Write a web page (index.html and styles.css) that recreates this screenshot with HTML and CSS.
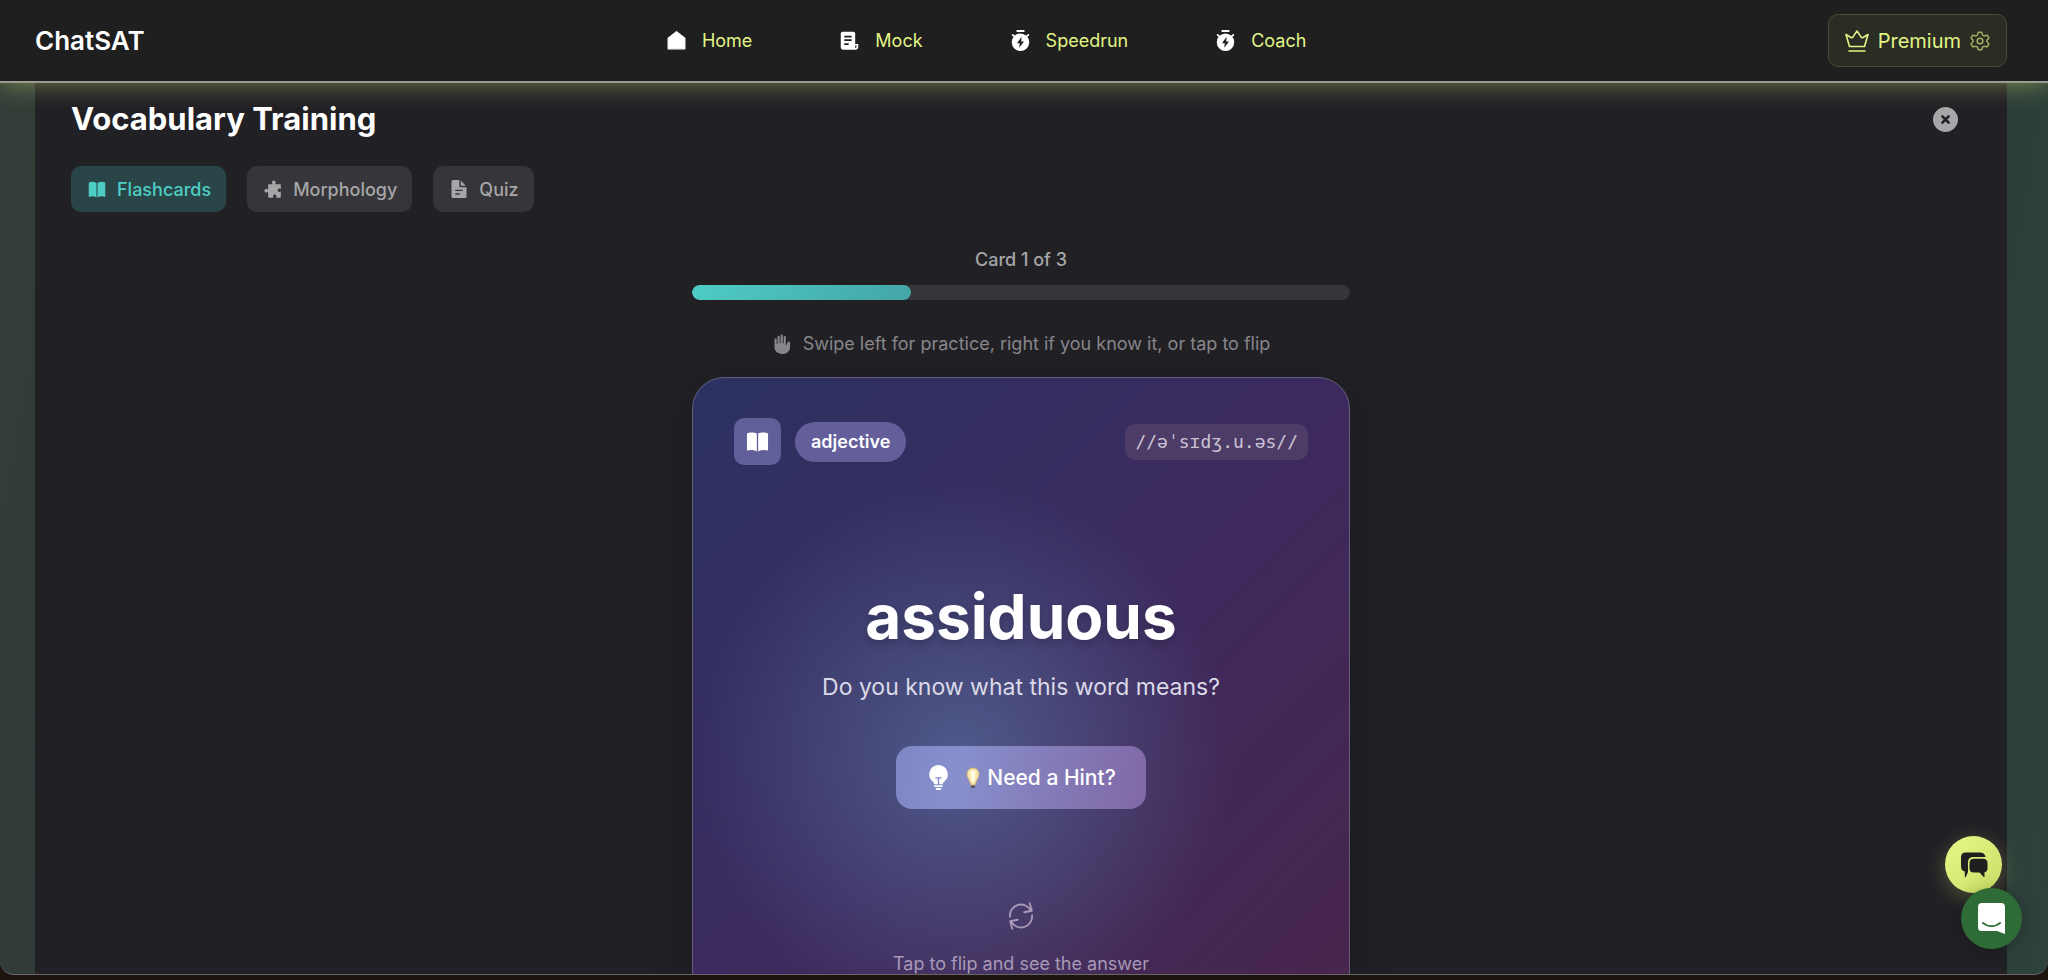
FILE: index.html
```
<!DOCTYPE html>
<html lang="en">
<head>
  <meta charset="UTF-8">
  <meta name="viewport" content="width=device-width, initial-scale=1.0">
  <title>ChatSAT - Vocabulary Training</title>
  <link rel="stylesheet" href="styles.css">
</head>
<body>
  <div class="window">
    <header class="navbar">
      <a class="brand" href="#">ChatSAT</a>
      <nav class="nav-links">
        <a href="#">
          <svg class="nav-icon" viewBox="0 0 24 24"><path d="M12 2 21.500 9.500V21.500h-19V9.500z" fill="currentColor" stroke="currentColor" stroke-width="1.500" stroke-linejoin="round"/></svg>
          Home
        </a>
        <a href="#">
          <svg class="nav-icon" viewBox="0 0 24 24"><path fill="currentColor" fill-rule="evenodd" d="M4 2h12.500a2 2 0 0 1 2 2v12H22v3.500a3 3 0 0 1-3 3H5a3 3 0 0 1-3-3V4a2 2 0 0 1 2-2zm2 4.500v2h8.500v-2zm0 4.200v2h8.500v-2zM6 15v2h5v-2zm12.500 2.800v2.700c1 0 1.500-.5 1.500-1.300v-1.400z"/></svg>
          Mock
        </a>
        <a href="#">
          <svg class="nav-icon" viewBox="0 0 24 24"><path fill="currentColor" fill-rule="evenodd" d="M7.500 0h9v2.200h-9zM12 4a10 10 0 1 1 0 20 10 10 0 0 1 0-20zm1.200 3.800L8 15h3.200l-.6 5.200L16 13h-3.200z"/><path d="m3 5.500 2.200 2M21 5.500l-2.200 2" stroke="currentColor" stroke-width="2" stroke-linecap="round"/></svg>
          Speedrun
        </a>
        <a href="#">
          <svg class="nav-icon" viewBox="0 0 24 24"><path fill="currentColor" fill-rule="evenodd" d="M7.500 0h9v2.200h-9zM12 4a10 10 0 1 1 0 20 10 10 0 0 1 0-20zm1.200 3.800L8 15h3.200l-.6 5.200L16 13h-3.200z"/><path d="m3 5.500 2.200 2M21 5.500l-2.200 2" stroke="currentColor" stroke-width="2" stroke-linecap="round"/></svg>
          Coach
        </a>
      </nav>
      <button class="premium" type="button">
        <svg class="crown" viewBox="0 0 24 24" fill="none" stroke="currentColor" stroke-width="1.600" stroke-linejoin="round" stroke-linecap="round"><path d="M4.500 17.500 1 5.500l5 3c.8.500 1.600.2 2-.6L12 2l4 5.900c.4.800 1.200 1.100 2 .6l5-3-3.500 12zM4 22h16"/></svg>
        Premium
        <svg class="gear" viewBox="0 0 24 24" fill="none" stroke="currentColor" stroke-width="1.800" stroke-linejoin="round"><path d="M10 1.500h4c.5 0 .7 3 1.200 3.400.5.500 1.200.9 1.900 1 .7.200 3.200-1.400 3.600-.9l2 3.500c.3.500-2.200 2.100-2.400 2.700v1.600c.2.700 2.700 2.200 2.400 2.700l-2 3.500c-.4.500-2.900-1-3.600-.8-.7.100-1.400.5-1.900 1-.5.500-.7 3.300-1.200 3.300h-4c-.5 0-.7-2.800-1.200-3.300-.5-.5-1.200-.9-1.900-1-.7-.2-3.200 1.300-3.600.8l-2-3.500c-.3-.5 2.200-2 2.400-2.700v-1.600c-.2-.6-2.700-2.200-2.400-2.700l2-3.500c.4-.5 2.900 1.100 3.600.9.700-.1 1.400-.5 1.900-1 .5-.4.700-3.400 1.200-3.400z"/><circle cx="12" cy="12" r="3.400"/></svg>
      </button>
    </header>

    <main class="panel">
      <div class="panel-head">
        <h1>Vocabulary Training</h1>
        <button class="close" type="button" aria-label="Close">
          <svg viewBox="0 0 24 24" fill="none" stroke="currentColor" stroke-width="2.500" stroke-linecap="round"><path d="m9 9 6 6m0-6-6 6"/></svg>
        </button>
      </div>

      <div class="tabs">
        <button class="tab active" type="button">
          <svg viewBox="0 0 24 24" fill="currentColor"><path d="M1 3.500c3.500-1.500 7-1.300 10.300.5V23C8 21.400 4.500 21.200 1 22.500zM23 3.500c-3.500-1.500-7-1.300-10.300.5V23c3.300-1.600 6.800-1.800 10.300-.5z"/></svg>
          Flashcards
        </button>
        <button class="tab" type="button">
          <svg viewBox="0 0 24 24" fill="currentColor"><path d="M6 5.500h4.800c.5 0 .7-.5.400-.9a2.400 2.400 0 1 1 3.800 0c-.3.400-.1.900.4.900h5.400A1.700 1.700 0 0 1 22.500 7v4.500c0 .5-.5.600-.9.300-1.500-1-3.400 0-3.400 1.900s1.900 2.900 3.400 1.900c.4-.3.900-.2.900.3V22a1.500 1.500 0 0 1-1.500 1.500h-4.500c-.5 0-.6-.5-.3-.9 1-1.500 0-3.200-1.900-3.200s-2.900 1.700-1.900 3.200c.3.400.2.900-.3.900H7A1.500 1.500 0 0 1 5.500 22v-5.400c0-.5-.5-.7-.9-.4a2.500 2.500 0 1 1 0-4c.4.300.9.100.9-.4V6z"/></svg>
          Morphology
        </button>
        <button class="tab" type="button">
          <svg viewBox="0 0 24 24" fill="currentColor"><path fill-rule="evenodd" d="M4 0h8.500v9.500H22V22a2 2 0 0 1-2 2H4a2 2 0 0 1-2-2V2a2 2 0 0 1 2-2zm3 13v1.700h10V13zm0 4.800v1.700h6v-1.700z"/><path d="M14.500.5v7H21z"/></svg>
          Quiz
        </button>
      </div>

      <section class="deck">
        <label class="count" for="progress">Card 1 of 3</label>
        <progress id="progress" class="progress" value="1" max="3"></progress>
        <p class="swipe">
          <svg viewBox="0 0 24 24" fill="currentColor"><path d="M3 6.500a1.300 1.300 0 0 1 2.600 0V12h1V3.500a1.300 1.300 0 0 1 2.700 0V11h1V1.800a1.300 1.300 0 0 1 2.700 0V11h1V3.500a1.300 1.300 0 0 1 2.600 0v11l1.900-4a1.600 1.600 0 0 1 3.200 0V16a8 8 0 0 1-9 7.900C6.500 23.900 3 20.500 3 16z"/></svg>
          Swipe left for practice, right if you know it, or tap to flip
        </p>

        <article class="card">
          <div class="card-head">
            <span class="book">
              <svg viewBox="0 0 24 24" fill="currentColor"><path d="M1 4c0-1.500 7-2.300 10.300-.3V22.500C8 20.600 4.500 20.600 1 21.500zM23 4c0-1.500-7-2.300-10.300-.3V22.500c3.300-1.900 6.800-1.900 10.300-1z"/></svg>
            </span>
            <span class="pos">adjective</span>
            <span class="ipa">//əˈsɪdʒ.u.əs//</span>
          </div>
          <div class="card-body">
            <h2>assiduous</h2>
            <p>Do you know what this word means?</p>
            <button class="hint" type="button">
              <svg class="bulb" viewBox="0 0 24 24" fill="currentColor"><path fill-rule="evenodd" d="M12 0a9 9 0 0 1 5.500 16c-1 .8-1.500 1.500-1.500 2.500h-3.300V13H15v-1.200H9V13h2.300v5.500H8c0-1-.5-1.700-1.500-2.500A9 9 0 0 1 12 0z"/><path d="M8 19.500h8V21H8zM9.500 22h5v2h-5z"/></svg>
              <svg class="bulb-emoji" viewBox="0 0 14 22"><path d="M7 1a6 6 0 0 1 6 6c0 4-3 6-4 11H5C4 13 1 11 1 7a6 6 0 0 1 6-6z" fill="#f6e6ae" stroke="#d3b67a"/><path d="M6 15 4.500 7a2.500 3.500 0 0 1 5 0L8 15z" fill="#fffbe5"/><path d="M5 18.500h4V21H5z" fill="#54565c"/></svg>
              Need a Hint?
            </button>
          </div>
          <div class="flip">
            <svg viewBox="0 0 24 24" fill="none" stroke="currentColor" stroke-width="1.600" stroke-linecap="round" stroke-linejoin="round"><path d="M2.500 12.500A9.500 9.500 0 0 1 20.500 7.500M21.500 11.500A9.500 9.500 0 0 1 3.500 16.500M19.500 1l1.800 6.500-6.500 1.300M4.500 23l-1.800-6.500 6.500-1.300"/></svg>
            <span>Tap to flip and see the answer</span>
          </div>
        </article>
      </section>
    </main>
  </div>

  <button class="fab feedback" type="button" aria-label="Feedback">
    <svg viewBox="0 0 28 28" fill="currentColor"><path d="M6 1.500h13c4 0 6 1.200 6.500 4.500H14c-4.500 0-6 2-6 6v9l-2.200 5c-.3.700-1 .3-1-.4V20.500C2 20 1 18 1 14.500V8c0-4.500 1-6.500 5-6.500z"/><path d="M14 7.800h9c3.200 0 4.500 1.500 4.500 4.500v4.500c0 3-1 4-3 4.500v4.200c0 .6-.5.800-1 .3L19.500 21.500H14c-3.200 0-4.500-1.500-4.500-4.500v-4.700c0-3 1.300-4.500 4.500-4.500z"/></svg>
  </button>
  <button class="fab chat" type="button" aria-label="Open chat">
    <svg viewBox="0 0 28 32"><path d="M4 0h20a4 4 0 0 1 4 4v28l-8-3H4a4 4 0 0 1-4-4V4a4 4 0 0 1 4-4z" fill="#fff"/><path d="M5 20.500c5 4.500 13 4.500 18 0" fill="none" stroke="#2e6b36" stroke-width="1.800" stroke-linecap="round"/></svg>
  </button>
</body>
</html>
```
FILE: styles.css
```
* {
  box-sizing: border-box;
}
body {
  margin: 0;
  height: 100vh;
  padding-bottom: 5px;
  overflow: hidden;
  background: #1c140d;
  color: #fff;
  font-family: Inter, "Noto Sans", sans-serif;
}
a {
  color: inherit;
  text-decoration: none;
}
button {
  font: inherit;
  border: none;
  cursor: pointer;
}
svg {
  flex: none;
  display: block;
}
.window {
  height: 100%;
  display: flex;
  flex-direction: column;
  overflow: hidden;
  border-bottom: 1px solid #66666a;
  border-radius: 0 0 14px 14px;
  background: linear-gradient(100deg, #333e39 0%, #2c2c2b 50%, #2e423c 100%);
}

/* top bar */
.navbar {
  flex: none;
  z-index: 1;
  display: flex;
  align-items: center;
  justify-content: space-between;
  height: 83px;
  padding: 0 41px 0 35px;
  background: #1f1f1f;
  border-bottom: 2px solid #9a9a90;
  box-shadow: 0 0 24px rgba(224, 247, 120, 0.45);
}
.brand {
  font-size: 26px;
  font-weight: 600;
}
.nav-links {
  display: flex;
  gap: 87px;
  color: #e2f585;
  font-size: 18px;
}
.nav-links a {
  display: flex;
  align-items: center;
  gap: 15px;
}
.nav-icon {
  width: 21px;
  height: 21px;
  color: #fff;
}
.premium {
  display: flex;
  align-items: center;
  gap: 9px;
  height: 53px;
  padding: 0 16px;
  border: 1px solid #4a4e35;
  border-radius: 10px;
  background: #2b2c23;
  color: #e2f585;
  font-size: 20px;
}
.crown {
  width: 24px;
  height: 24px;
}
.gear {
  width: 20px;
  height: 20px;
  opacity: 0.65;
}

/* main panel */
.panel {
  flex: 1;
  min-height: 0;
  margin: 0 41px 0 35px;
  padding: 16px 36px 0;
  background: #212025;
}
.panel-head {
  display: flex;
  align-items: center;
  justify-content: space-between;
  padding-right: 13px;
}
h1 {
  margin: 0;
  font-size: 31px;
  font-weight: 700;
  line-height: 40px;
}
.close {
  width: 25px;
  height: 25px;
  padding: 0;
  border-radius: 50%;
  background: #a6a6a8;
  color: #212025;
}
.tabs {
  display: flex;
  gap: 21px;
  margin-top: 27px;
}
.tab {
  display: flex;
  align-items: center;
  gap: 11px;
  height: 46px;
  padding: 0 15px 0 17px;
  border-radius: 10px;
  background: #363539;
  color: #a6a6a8;
  font-size: 18px;
  font-weight: 500;
}
.tab svg {
  width: 18px;
  height: 18px;
}
.tab.active {
  background: #2a4547;
  color: #4ecdc4;
}

/* flashcard deck */
.deck {
  display: flex;
  flex-direction: column;
  align-items: center;
  width: 658px;
  max-width: 100%;
  margin: 0 auto;
  padding-top: 36px;
}
.count {
  color: #a6a6a8;
  font-size: 18px;
  font-weight: 500;
  line-height: 24px;
}
.progress {
  appearance: none;
  width: 100%;
  height: 15px;
  margin-top: 13px;
  border: none;
  border-radius: 8px;
  overflow: hidden;
  background: #363539;
}
.progress::-webkit-progress-bar {
  background: #363539;
}
.progress::-webkit-progress-value {
  border-radius: 8px;
  background: linear-gradient(135deg, #4ecdc4, #44a5a6);
}
.swipe {
  display: flex;
  align-items: center;
  gap: 11px;
  margin: 32px 0 21px;
  color: #87868a;
  font-size: 18px;
  line-height: 24px;
}
.swipe svg {
  width: 20px;
  height: 20px;
}
.card {
  width: 100%;
  height: 720px;
  padding: 40px 41px;
  display: flex;
  flex-direction: column;
  border: 1px solid #645f7d;
  border-radius: 32px;
  background:
    radial-gradient(ellipse 270px 280px at 41% 53%, rgba(96, 135, 180, 0.52), rgba(96, 130, 180, 0)),
    linear-gradient(135deg, #2b3262 0%, #3d295d 50%, #4a2549 100%);
  box-shadow: 0 10px 40px rgba(0, 0, 0, 0.2);
}
.card-head {
  display: flex;
  align-items: center;
}
.book {
  padding: 12px;
  border-radius: 10px;
  background: #605f99;
}
.book svg {
  width: 23px;
  height: 23px;
}
.pos {
  margin-left: 14px;
  padding: 0 16px;
  border-radius: 20px;
  background: #645e9b;
  font-size: 18px;
  font-weight: 600;
  line-height: 40px;
}
.ipa {
  margin-left: auto;
  padding: 0 10px;
  border-radius: 10px;
  background: #4d3c67;
  color: #cbc3d5;
  font-family: "DejaVu Sans Mono", monospace;
  font-size: 18px;
  line-height: 36px;
}
.card-body {
  display: flex;
  flex-direction: column;
  align-items: center;
  margin-top: 114px;
}
h2 {
  margin: 0;
  font-size: 62px;
  font-weight: 700;
  line-height: 76px;
  text-shadow: 0 4px 8px rgba(0, 0, 0, 0.2);
}
.card-body p {
  margin: 16px 0 43px;
  color: #dbd9e8;
  font-size: 23px;
  line-height: 32px;
}
.hint {
  display: flex;
  align-items: center;
  height: 63px;
  padding: 0 30px;
  border-radius: 16px;
  background: linear-gradient(100deg, #8086c4, #8790cd 25%, #8377b4 70%, #8068a6);
  color: #fff;
  font-size: 21px;
  font-weight: 500;
}
.bulb {
  width: 25px;
  height: 25px;
}
.bulb-emoji {
  width: 14px;
  height: 22px;
  margin: 0 7px 0 15px;
}
.flip {
  display: flex;
  flex-direction: column;
  align-items: center;
  gap: 22px;
  margin-top: 93px;
  color: #a999b8;
  font-size: 18px;
  line-height: 24px;
}
.flip svg {
  width: 28px;
  height: 28px;
}

/* floating buttons */
.fab {
  position: fixed;
  display: grid;
  place-items: center;
  padding: 0;
  border-radius: 50%;
}
.feedback {
  right: 46px;
  bottom: 87px;
  width: 57px;
  height: 57px;
  background: linear-gradient(135deg, #e6fa88, #c9dc66);
  color: #1f1f1f;
  box-shadow: 0 5px 20px rgba(224, 247, 120, 0.25);
}
.feedback svg {
  width: 28px;
  height: 28px;
}
.chat {
  right: 26px;
  bottom: 31px;
  width: 61px;
  height: 61px;
  background: #2e6b36;
  box-shadow: 0 2px 16px rgba(0, 0, 0, 0.25);
}
.chat svg {
  width: 27px;
  height: 31px;
}
```
